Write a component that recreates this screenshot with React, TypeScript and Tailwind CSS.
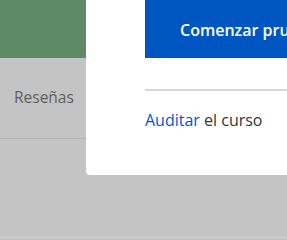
export default function App() {
  return (
    <div
      className="relative w-[287px] h-[240px] overflow-hidden bg-[#c4c4c4]"
      style={{ fontFamily: '"Open Sans", "Liberation Sans", sans-serif' }}
    >
      {/* page under the overlay */}
      <div className="flex flex-col w-[86px] h-full">
        <div className="h-[58px] bg-[#5e8a68]" />
        <div className="h-[81px] flex items-center pl-[14px] border-b border-[#b3b3b3] text-[15.5px] text-[#5f5f5f]">
          Reseñas
        </div>
      </div>
      <div className="absolute left-0 right-0 bottom-[2px] h-px bg-[#d0d0d0]" />

      {/* modal */}
      <div className="absolute left-[86px] top-0 w-[300px] h-[175px] bg-white rounded-bl-[4px] pl-[59px]">
        <div className="w-[260px] h-[58px] bg-[#0056c0] flex items-center pl-[35px] pt-[2px] text-white text-[16px] font-semibold whitespace-nowrap">
          Comenzar prueba gratuita
        </div>
        <div className="mt-[31px] h-[2px] bg-[#d9d9d9]" />
        <div className="mt-[17px] text-[16px] text-[#333333] whitespace-nowrap">
          <span className="text-[#0056d2]">Auditar</span> el curso
        </div>
      </div>
    </div>
  );
}
